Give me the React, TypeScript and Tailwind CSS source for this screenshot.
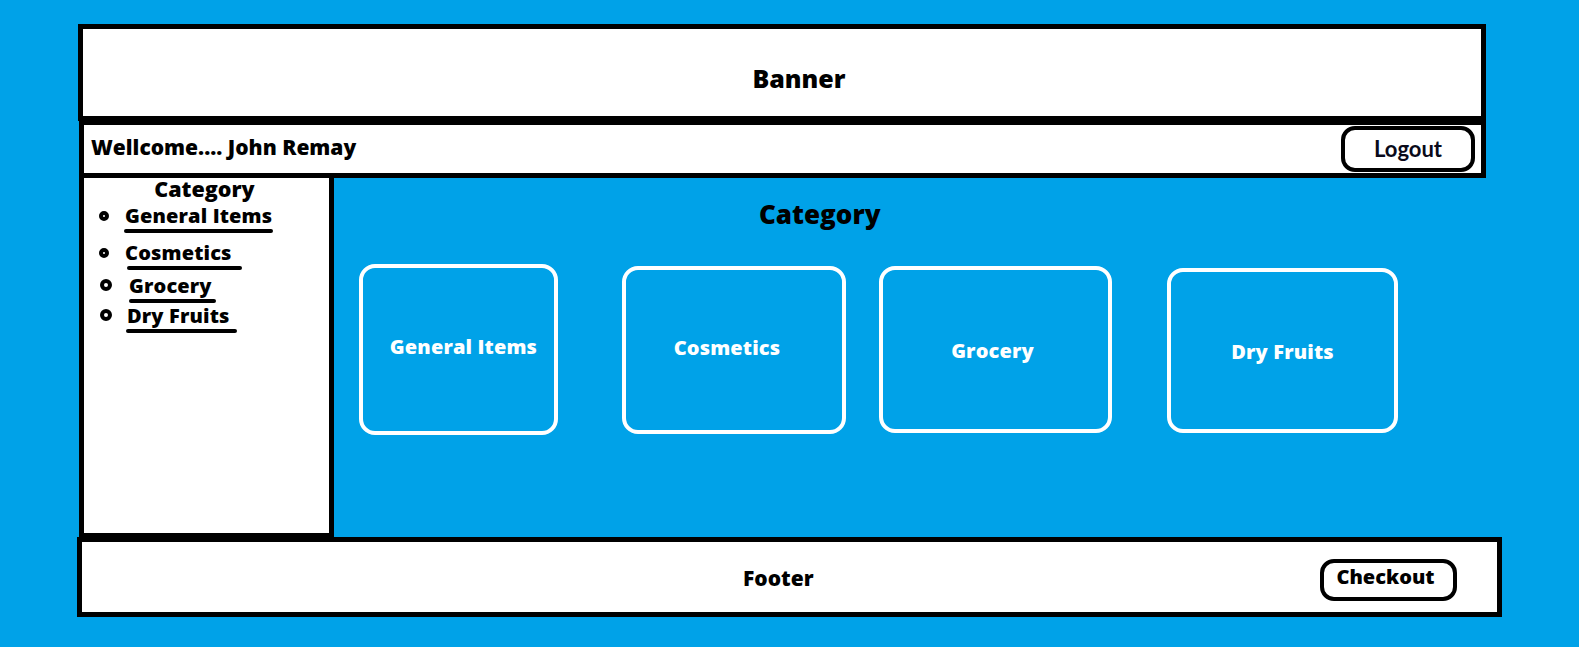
const font = { fontFamily: '"Open Sans", Lato, sans-serif' }
const lato = { fontFamily: 'Lato, "Open Sans", sans-serif' }

const sideItems = [
  { label: 'General Items', row: 'mt-[4px] ml-[15px]', bullet: 'mt-[7px] w-[10px] h-[10px]', gap: 'ml-[16px]', line: 'w-[calc(100%+2px)] -ml-[1px]' },
  { label: 'Cosmetics', row: 'mt-[8px] ml-[15px]', bullet: 'mt-[7px] w-[10px] h-[10px]', gap: 'ml-[16px]', line: 'w-[calc(100%+8px)] ml-[2px]' },
  { label: 'Grocery', row: 'mt-[4px] ml-[16px]', bullet: 'mt-[5px] w-[12px] h-[12px]', gap: 'ml-[17px]', line: 'w-[calc(100%+4px)]' },
  { label: 'Dry Fruits', row: 'mt-[1px] ml-[16px]', bullet: 'mt-[5px] w-[12px] h-[12px]', gap: 'ml-[15px]', line: 'w-[calc(100%+8px)] -ml-[1px]' },
]

const cards = [
  { label: 'General Items', box: 'ml-[25px] mt-[0px] w-[199px] h-[171px]', text: 'pb-[6px] pl-[10px]' },
  { label: 'Cosmetics', box: 'ml-[64px] mt-[2px] w-[224px] h-[168px]', text: 'pb-[4px] pr-[14px]' },
  { label: 'Grocery', box: 'ml-[33px] mt-[2px] w-[233px] h-[167px]', text: 'pt-[2px] pr-[6px]' },
  { label: 'Dry Fruits', box: 'ml-[55px] mt-[4px] w-[231px] h-[165px]', text: 'pt-[2px]' },
]

function SideLink({ item }: { item: (typeof sideItems)[number] }) {
  return (
    <div className={`flex items-start ${item.row}`}>
      <span className={`rounded-full border-[4px] border-black shrink-0 ${item.bullet}`} />
      <div className={`flex flex-col ${item.gap}`}>
        <span className="text-[20px] leading-[24px] font-extrabold tracking-[0.15px] text-black whitespace-nowrap">{item.label}</span>
        <span className={`mt-[1px] h-[4px] rounded-full bg-black ${item.line}`} />
      </div>
    </div>
  )
}

export default function App() {
  return (
    <div className="w-[1579px] h-[647px] bg-[#00a2e8] pt-[24px] pl-[78px] overflow-hidden" style={font}>
      {/* banner */}
      <div className="w-[1408px] h-[97px] bg-white border-[5px] border-black flex items-center justify-center pl-[34px] pt-[12px]">
        <span className="text-[25px] font-extrabold text-black">Banner</span>
      </div>

      {/* welcome bar */}
      <div className="ml-[1px] w-[1407px] h-[57px] bg-white border-[5px] border-t-[4px] border-black flex items-center justify-between">
        <span className="pl-[7px] pb-[3px] text-[21px] font-extrabold text-black">Wellcome.... John Remay</span>
        <button
          className="mr-[6px] w-[134px] h-[46px] rounded-[14px] border-[4px] border-black bg-white flex items-center justify-center pb-[1px] text-[22px] font-bold text-[#0a0a1a]"
          style={lato}
        >
          Logout
        </button>
      </div>

      <div className="flex">
        {/* sidebar */}
        <div className="ml-[1px] w-[255px] h-[359px] bg-white border-x-[5px] border-b-[4px] border-black">
          <p className="text-center text-[21.5px] leading-[22px] font-extrabold text-black pr-[4px]">Category</p>
          {sideItems.map(item => <SideLink key={item.label} item={item} />)}
        </div>

        {/* main */}
        <div className="flex-1 flex flex-col">
          <h2 className="mt-[20px] ml-[425px] text-[26px] leading-[32px] font-extrabold text-black">Category</h2>
          <div className="mt-[34px] flex items-start">
            {cards.map(c => (
              <div key={c.label} className={`${c.box} rounded-[16px] border-[4px] border-white flex items-center justify-center`}>
                <span className={`text-[20px] font-extrabold tracking-[0.15px] text-white ${c.text}`}>{c.label}</span>
              </div>
            ))}
          </div>
        </div>
      </div>

      {/* footer */}
      <div className="-ml-[1px] w-[1425px] h-[80px] bg-white border-[5px] border-black flex items-center">
        <span className="ml-[661px] pt-[4px] text-[21px] font-extrabold text-black">Footer</span>
        <button className="ml-auto mr-[40px] mt-[6px] w-[137px] h-[42px] rounded-[14px] border-[4px] border-black bg-white flex items-center justify-center pb-[6px] pr-[6px] text-[20px] font-extrabold text-black">
          Checkout
        </button>
      </div>
    </div>
  )
}
